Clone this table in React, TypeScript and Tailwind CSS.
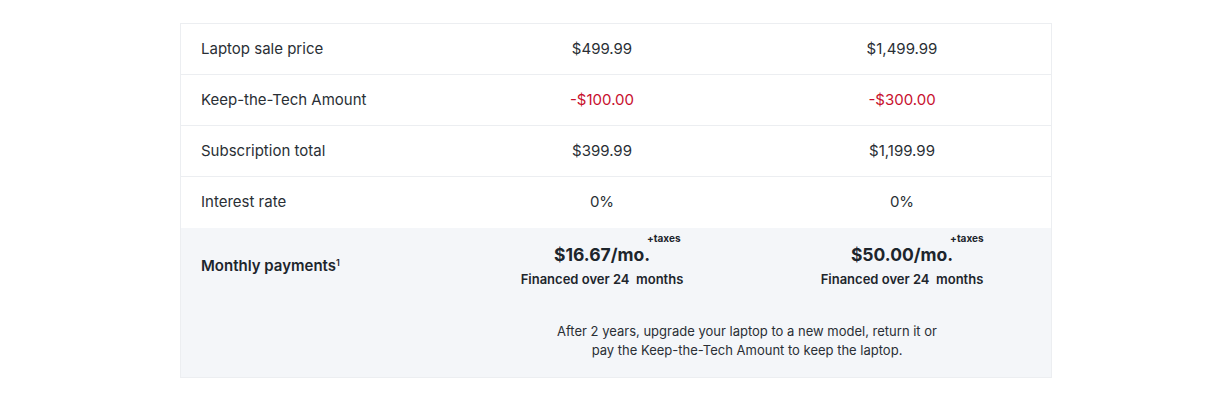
const rows = [
  { label: "Laptop sale price", a: "$499.99", b: "$1,499.99", red: false },
  { label: "Keep-the-Tech Amount", a: "-$100.00", b: "-$300.00", red: true },
  { label: "Subscription total", a: "$399.99", b: "$1,199.99", red: false },
  { label: "Interest rate", a: "0%", b: "0%", red: false },
];

const plans = [
  { price: "$16.67/mo.", months: 24 },
  { price: "$50.00/mo.", months: 24 },
];

function Price({ price, months }: { price: string; months: number }) {
  return (
    <div className="flex flex-col items-center pt-[4px]">
      <div className="relative mt-[11px]">
        <span className="text-[17.5px] font-bold leading-[24px] text-[#1d252c]">{price}</span>
        <span className="absolute left-[calc(100%-3px)] top-[-11px] text-[10px] font-bold leading-[12px] text-[#1d252c]">
          +taxes
        </span>
      </div>
      <div className="mt-[3px] text-[13px] font-semibold leading-[18px] text-[#1d252c]">
        Financed over {months}&nbsp; months
      </div>
    </div>
  );
}

export default function App() {
  return (
    <div className="min-h-[402px] bg-white pt-[23px]" style={{ fontFamily: "Inter, 'Noto Sans', sans-serif" }}>
      <div className="mx-auto w-[872px] border border-[#eceef1]">
        {rows.map((r, i) => (
          <div
            key={r.label}
            className={
              "grid h-[51px] grid-cols-[271px_300px_300px] items-center text-[15px] text-[#2a2f35] " +
              (i < rows.length - 1 ? "border-b border-[#eceef1]" : "")
            }
          >
            <div className="pl-[20px]">{r.label}</div>
            <div className={"text-center " + (r.red ? "text-[#c8102e]" : "")}>{r.a}</div>
            <div className={"text-center " + (r.red ? "text-[#c8102e]" : "")}>{r.b}</div>
          </div>
        ))}
        <div className="bg-[#f4f6f9] pb-[17px]">
          <div className="grid grid-cols-[271px_300px_300px] items-start">
            <div className="pl-[20px] pt-[27px] text-[15px] font-semibold leading-[22px] text-[#1d252c]">
              Monthly payments<span className="relative -top-[5px] text-[9px]">1</span>
            </div>
            {plans.map((p) => (
              <Price key={p.price} {...p} />
            ))}
          </div>
          <div className="grid grid-cols-[271px_600px]">
            <div />
            <p className="mt-[34px] pr-[10px] text-center text-[13px] leading-[19px] text-[#2a2f35]">
              After 2 years, upgrade your laptop to a new model, return it or
              <br />
              pay the Keep-the-Tech Amount to keep the laptop.
            </p>
          </div>
        </div>
      </div>
    </div>
  );
}
